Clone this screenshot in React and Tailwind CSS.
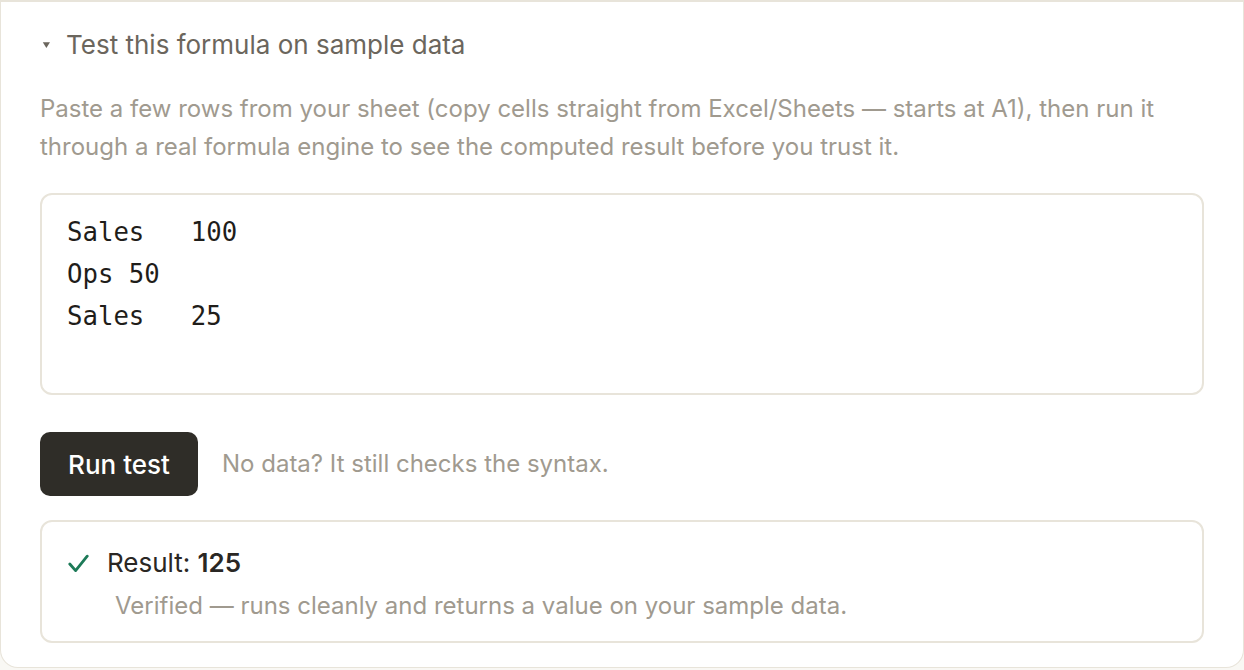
import React from "react";

export default function App() {
  return (
    <div className="w-[1244px] h-[670px] bg-[#f9f8f4] overflow-hidden" style={{ fontFamily: "Inter, 'Noto Sans', sans-serif" }}>
      <div className="h-[668px] bg-white border-x border-b border-t-2 border-[#e8e4da] rounded-b-[18px] px-[39px] flex flex-col">
        <div className="flex items-center h-[30px] mt-[28px]">
          <svg width="9" height="8" viewBox="0 0 9 8" className="ml-[2px]">
            <path d="M0.8 1.2 L8 1.2 L4.4 7 Z" fill="#6b665d" />
          </svg>
          <span className="ml-[15px] text-[26px] leading-[30px] text-[#6b665d]">Test this formula on sample data</span>
        </div>
        <p className="mt-[30px] text-[24px] leading-[38px] text-[#a09a8f]">
          Paste a few rows from your sheet (copy cells straight from Excel/Sheets — starts at A1), then run it through a real formula engine to see the computed result before you trust it.
        </p>
        <div className="mt-[27px] h-[202px] border-2 border-[#e8e4da] rounded-[12px] pt-[16px] px-[25px]">
          <pre className="text-[25.7px] leading-[42px] text-[#1f1d1a] m-0" style={{ fontFamily: "'DejaVu Sans Mono', 'Liberation Mono', monospace", tabSize: 8 }}>
{"Sales\t100\nOps 50\nSales\t25"}
          </pre>
        </div>
        <div className="mt-[37px] flex items-center">
          <button className="h-[64px] w-[158px] rounded-[10px] bg-[#2f2d28] text-white text-[26px] font-medium">Run test</button>
          <span className="ml-[24px] text-[24px] text-[#a09a8f]">No data? It still checks the syntax.</span>
        </div>
        <div className="mt-[24px] h-[123px] border-2 border-[#e8e4da] rounded-[12px] pt-[26px] pl-[26px]">
          <div className="flex items-center h-[30px]">
            <svg width="21" height="19" viewBox="0 0 21 19" fill="none">
              <path d="M1.8 10 L7.6 16.6 L19.2 2.2" stroke="#1d7a58" strokeWidth="2.8" strokeLinecap="round" strokeLinejoin="round" />
            </svg>
            <span className="ml-[18px] text-[26px] leading-[30px] text-[#2a2724]">Result: <span className="font-semibold">125</span></span>
          </div>
          <div className="mt-[13px] ml-[47px] text-[24px] leading-[30px] text-[#a09a8f]">Verified — runs cleanly and returns a value on your sample data.</div>
        </div>
      </div>
    </div>
  );
}
